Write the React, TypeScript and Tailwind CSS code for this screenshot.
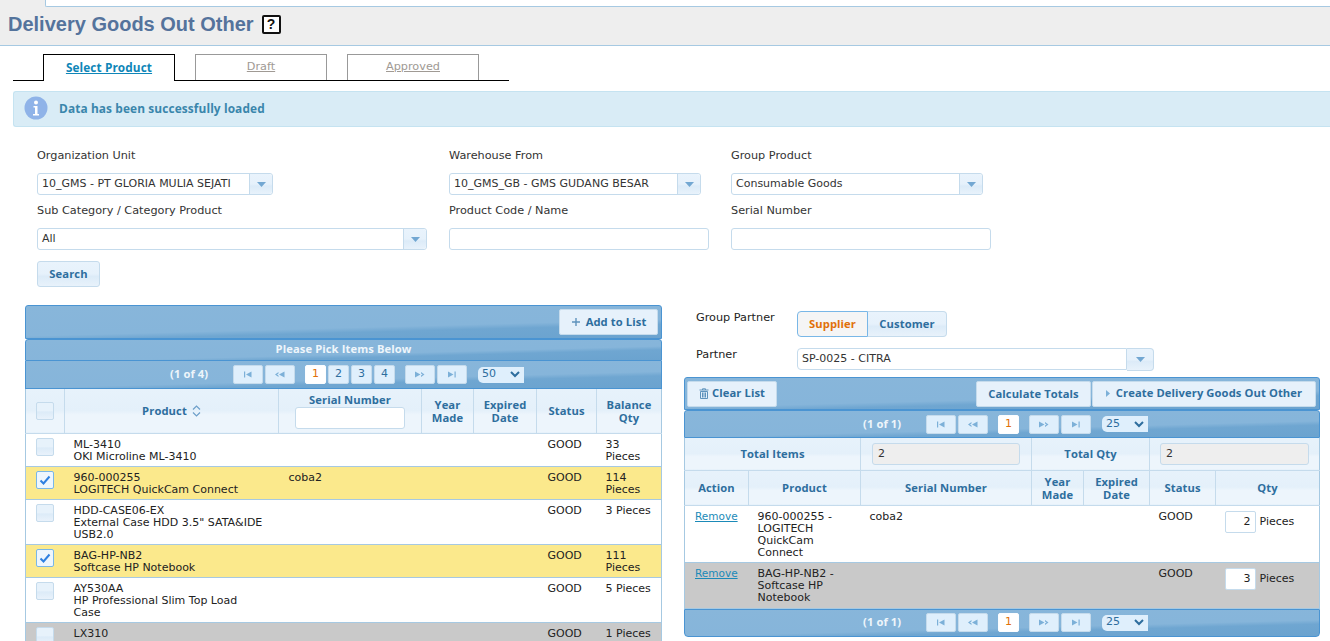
import React from "react";

const barBg = "bg-[linear-gradient(178.5deg,#88b6da_0%,#86b5da_62%,#6fa6d1_72%,#6ba3cf_100%)]";
const headBg = "bg-[linear-gradient(180deg,#e7f2fb_0%,#e4f0fa_50%,#edf5fc_60%,#edf5fc_100%)]";
const btnBg = "bg-[linear-gradient(180deg,#e9f3fc_0%,#e6f1fb_50%,#dcebf8_60%,#e8f2fb_100%)]";
const boldFace = "font-['Open_Sans',sans-serif] font-bold tracking-[0.1px]";
const bold = `${boldFace} text-[11.2px]`;

function Caret() {
  return (
    <svg width="9" height="5" viewBox="0 0 9 5" className="block">
      <path d="M0 0h9L4.5 5z" fill="#72a7d2" />
    </svg>
  );
}

function Combo({ value, w }: { value: string; w: string }) {
  return (
    <div className={`flex h-[22px] ${w} rounded-[3px] border border-[#c5dbec] bg-white`}>
      <div className="flex-1 truncate pl-[4px] text-[11px] leading-[20px] text-[#333]">{value}</div>
      <div className={`flex w-[23px] items-center justify-center rounded-r-[3px] border-l border-[#c5dbec] ${btnBg}`}>
        <Caret />
      </div>
    </div>
  );
}

function Field({ label, children, className = "" }: { label: string; children: React.ReactNode; className?: string }) {
  return (
    <div className={className}>
      <div className="h-[24px] text-[11.25px] leading-[14px] text-[#333]">{label}</div>
      {children}
    </div>
  );
}

function PageIcon({ d }: { d: string }) {
  return (
    <svg width="12" height="7" viewBox="0 0 12 7">
      <path d={d} fill="#7cb0d8" />
    </svg>
  );
}

const FIRST = "M2 0.5h1.2v6H2zM4 3.5L9.5 0.5v6z";
const PREV = "M1 3.5L4.5 1v1.6L3 3.5l1.5 .9V6zM5 3.5L10.5 0.5v6z";
const NEXT = "M1 0.5L6.5 3.5 1 6.5zM7 1L10.5 3.5 7 6V4.4l1.5-.9L7 2.6z";
const LAST = "M2 0.5L7.5 3.5 2 6.5zM8.5 0.5h1.2v6H8.5z";

function NavBtn({ d }: { d: string }) {
  return (
    <span className="flex h-[19px] w-[30px] items-center justify-center rounded-[2px] border border-[#c5dbec] bg-[#dfeffc]">
      <PageIcon d={d} />
    </span>
  );
}

function PageNo({ n, active }: { n: string; active?: boolean }) {
  return (
    <span
      className={`flex h-[19px] w-[21px] items-center justify-center rounded-[2px] border text-[11px] ${
        active ? "border-[#fbfdff] bg-white text-[#e17009]" : "border-[#c5dbec] bg-[#dfeffc] text-[#2e6e9e]"
      }`}
    >
      {n}
    </span>
  );
}

function SizeSelect({ value }: { value: string }) {
  return (
    <span className="flex h-[16px] w-[46px] items-center justify-between rounded-l-[5px] bg-[#dfeffc] pl-[4px] pr-[4px] text-[11px] text-[#2e6e9e]">
      {value}
      <svg width="10" height="7" viewBox="0 0 10 7">
        <path d="M1 1l4 4 4-4" fill="none" stroke="#2e6e9e" strokeWidth="2" />
      </svg>
    </span>
  );
}

function Pager({ of, pages, size, className }: { of: string; pages: string[]; size: string; className: string }) {
  return (
    <div className={`flex items-center ${barBg} ${className}`}>
      <span className={`w-[41px] whitespace-nowrap text-[#eef5fb] ${bold}`}>{of}</span>
      <span className="ml-[22px] flex gap-[2px]">
        <NavBtn d={FIRST} />
        <NavBtn d={PREV} />
      </span>
      <span className="ml-[10px] flex gap-[2px]">
        {pages.map((p, i) => (
          <PageNo key={p} n={p} active={i === 0} />
        ))}
      </span>
      <span className="ml-[10px] flex gap-[2px]">
        <NavBtn d={NEXT} />
        <NavBtn d={LAST} />
      </span>
      <span className="ml-[11px]">
        <SizeSelect value={size} />
      </span>
    </div>
  );
}

function Check({ on }: { on?: boolean }) {
  return (
    <span
      className={`flex h-[18px] w-[18px] items-center justify-center rounded-[2px] border ${
        on ? "border-[#79b7e7] bg-[#eef6fd]" : "border-[#c5dbec] bg-[linear-gradient(180deg,#e7f2fb_50%,#dcebf8_55%,#e9f2fb_100%)]"
      }`}
    >
      {on && (
        <svg width="12" height="10" viewBox="0 0 12 10">
          <path d="M1.5 5.5L4.5 8.5 10.5 1.5" fill="none" stroke="#2f80e0" strokeWidth="2" />
        </svg>
      )}
    </span>
  );
}

function Th({ children, className = "", colSpan }: { children?: React.ReactNode; className?: string; colSpan?: number }) {
  return (
    <th colSpan={colSpan} className={`border-r border-[#c5dbec] px-0 text-center align-middle leading-[13px] text-[#2e6e9e] last:border-r-0 ${bold} ${className}`}>
      {children}
    </th>
  );
}

type Row = { code: string; name: string[]; serial?: string; qty: string[]; bg: string; on?: boolean; h: string };

const rows: Row[] = [
  { code: "ML-3410", name: ["OKI Microline ML-3410"], qty: ["33", "Pieces"], bg: "bg-white", h: "h-[33px]" },
  { code: "960-000255", name: ["LOGITECH QuickCam Connect"], serial: "coba2", qty: ["114", "Pieces"], bg: "bg-[#fbe98c]", on: true, h: "h-[33px]" },
  { code: "HDD-CASE06-EX", name: ['External Case HDD 3.5" SATA&IDE', "USB2.0"], qty: ["3 Pieces"], bg: "bg-white", h: "h-[45px]" },
  { code: "BAG-HP-NB2", name: ["Softcase HP Notebook"], qty: ["111", "Pieces"], bg: "bg-[#fbe98c]", on: true, h: "h-[33px]" },
  { code: "AY530AA", name: ["HP Professional Slim Top Load", "Case"], qty: ["5 Pieces"], bg: "bg-white", h: "h-[45px]" },
  { code: "LX310", name: [], qty: ["1 Pieces"], bg: "bg-[#c9c9c9]", h: "h-[19px]" },
];

function LeftPanel() {
  return (
    <div className="w-[637px] shrink-0">
      <div className={`flex h-[34px] items-center justify-end rounded-t-[3px] border border-[#4a94d2] pr-[3px] ${barBg}`}>
        <span className={`flex h-[26px] w-[99px] items-center justify-center gap-[5px] rounded-[2px] border border-[#c5dbec] bg-[#e6f1fb] text-[#2e6e9e] ${bold}`}>
          <svg width="10" height="10" viewBox="0 0 10 10">
            <path d="M5 1v8M1 5h8" stroke="#5f93bd" strokeWidth="1.4" />
          </svg>
          Add to List
        </span>
      </div>
      <div className={`h-[22px] rounded-t-[3px] border border-[#4a94d2] text-center leading-[18px] text-[#eef5fb] ${bold} ${barBg}`}>
        Please Pick Items Below
      </div>
      <Pager of="(1 of 4)" pages={["1", "2", "3", "4"]} size="50" className="h-[28px] border-x border-b border-[#4a94d2] pl-[144px]" />
      <table className="w-full table-fixed border-collapse border-x border-[#a6c9e2]">
        <colgroup>
          <col className="w-[39px]" />
          <col className="w-[214px]" />
          <col className="w-[143px]" />
          <col className="w-[52px]" />
          <col className="w-[63px]" />
          <col className="w-[60px]" />
          <col />
        </colgroup>
        <thead>
          <tr className={`h-[44px] border-b border-[#c5dbec] ${headBg}`}>
            <Th>
              <span className="flex justify-center">
                <Check />
              </span>
            </Th>
            <Th>
              <span className="inline-flex items-center gap-[5px]">
                Product
                <svg width="9" height="12" viewBox="0 0 9 12">
                  <path d="M1 4.5L4.5 1 8 4.5M1 7.5L4.5 11 8 7.5" fill="none" stroke="#6d9fc9" strokeWidth="1.2" />
                </svg>
              </span>
            </Th>
            <Th>
              <div>Serial Number</div>
              <div className="mx-auto mt-[1px] h-[22px] w-[110px] rounded-[3px] border border-[#c5dbec] bg-white" />
            </Th>
            <Th>Year<br />Made</Th>
            <Th>Expired<br />Date</Th>
            <Th>Status</Th>
            <Th>Balance<br />Qty</Th>
          </tr>
        </thead>
        <tbody>
          {rows.map((r) => (
            <tr key={r.code} className={`${r.h} border-b border-[#a6c9e2] align-top text-[11px] leading-[12px] text-[#222] ${r.bg}`}>
              <td className="pt-[4px]">
                <span className="flex justify-center">
                  <Check on={r.on} />
                </span>
              </td>
              <td className="pl-[9px] pt-[5px]">
                {r.code}
                {r.name.map((n) => (
                  <div key={n}>{n}</div>
                ))}
              </td>
              <td className="pl-[10px] pt-[5px]">{r.serial}</td>
              <td />
              <td />
              <td className="pl-[11px] pt-[5px]">GOOD</td>
              <td className="pl-[9px] pt-[5px]">
                {r.qty.map((q) => (
                  <div key={q}>{q}</div>
                ))}
              </td>
            </tr>
          ))}
        </tbody>
      </table>
    </div>
  );
}

function CartRow({ lines, serial, qty, bg, h }: { lines: string[]; serial?: string; qty: string; bg: string; h: string }) {
  return (
    <tr className={`${h} border-b border-[#a6c9e2] align-top text-[11px] leading-[12px] text-[#222] ${bg}`}>
      <td className="pl-[10px] pt-[4px]">
        <span className="text-[10.5px] text-[#1b8ab8] underline">Remove</span>
      </td>
      <td className="pl-[9px] pt-[5px]">
        {lines.map((l) => (
          <div key={l}>{l}</div>
        ))}
      </td>
      <td className="pl-[9px] pt-[5px]">{serial}</td>
      <td />
      <td />
      <td className="pl-[9px] pt-[5px]">GOOD</td>
      <td className="pl-[9px] pt-[5px]">
        <div className="flex items-center gap-[4px]">
          <span className="h-[22px] w-[31px] rounded-[2px] border border-[#c5dbec] bg-white pr-[4px] text-right text-[11px] leading-[20px]">{qty}</span>
          Pieces
        </div>
      </td>
    </tr>
  );
}

function RightPanel() {
  return (
    <div className="mt-[5px] w-[636px] shrink-0">
      <div className="flex h-[32px] items-start">
        <span className="ml-[12px] mt-[1px] w-[101px] text-[11.25px] leading-[14px] text-[#222]">Group Partner</span>
        <span className={`mt-[1px] flex h-[26px] w-[150px] rounded-[4px] leading-[24px] ${bold}`}>
          <span className="w-[71px] rounded-l-[4px] border border-[#79b7e7] bg-[#f5f5f5] text-center text-[#e17009]">Supplier</span>
          <span className={`flex-1 rounded-r-[4px] border border-l-0 border-[#c5dbec] text-center text-[#2e6e9e] ${btnBg}`}>Customer</span>
        </span>
      </div>
      <div className="mt-[4px] flex h-[31px] items-start">
        <span className="ml-[12px] mt-[2px] w-[101px] text-[11.25px] leading-[14px] text-[#222]">Partner</span>
        <span className="mt-[2px] flex h-[22px] w-[330px] rounded-l-[4px] border border-[#c5dbec] bg-white pl-[4px] text-[11px] leading-[20px] text-[#333]">SP-0025 - CITRA</span>
        <span className={`mt-[2px] flex h-[23px] w-[27px] items-center justify-center rounded-r-[4px] border border-l-0 border-[#c5dbec] ${btnBg}`}>
          <Caret />
        </span>
      </div>
      <div className={`flex h-[33px] items-center gap-[1px] rounded-t-[3px] border border-[#4a94d2] pl-[2px] pr-[3px] ${barBg}`}>
        <span className={`flex h-[26px] w-[90px] items-center justify-center gap-[3px] rounded-[2px] border border-[#c5dbec] bg-[#e6f1fb] text-[#2e6e9e] ${bold}`}>
          <svg width="10" height="11" viewBox="0 0 10 11">
            <path d="M0.5 2h9M3.5 2V.8h3V2M1.5 3.5h7v7h-7zM3.5 4.5v5M5 4.5v5M6.5 4.5v5" fill="none" stroke="#5f93bd" strokeWidth="1" />
          </svg>
          Clear List
        </span>
        <span className={`ml-auto h-[26px] w-[115px] rounded-[2px] border border-[#c5dbec] bg-[#e6f1fb] text-center leading-[24px] text-[#2e6e9e] ${bold}`}>Calculate Totals</span>
        <span className={`flex h-[26px] w-[224px] items-center justify-center gap-[6px] rounded-[2px] border border-[#c5dbec] bg-[#e6f1fb] text-[#2e6e9e] ${bold}`}>
          <svg width="4" height="7" viewBox="0 0 4 7">
            <path d="M0 0l4 3.5L0 7z" fill="#7cb0d8" />
          </svg>
          Create Delivery Goods Out Other
        </span>
      </div>
      <Pager of="(1 of 1)" pages={["1"]} size="25" className="h-[28px] rounded-t-[3px] border border-[#4a94d2] pl-[178px]" />
      <table className="w-full table-fixed border-collapse border-x border-[#a6c9e2]">
        <colgroup>
          <col className="w-[64px]" />
          <col className="w-[112px]" />
          <col className="w-[171px]" />
          <col className="w-[52px]" />
          <col className="w-[66px]" />
          <col className="w-[66px]" />
          <col />
        </colgroup>
        <thead>
          <tr className={`h-[32px] border-b border-[#c5dbec] ${headBg}`}>
            <Th colSpan={2}>Total Items</Th>
            <Th className="text-left">
              <div className="mx-[11px] mt-[1px] h-[22px] rounded-[3px] border border-[#c5dbec] bg-[#eee] pl-[5px] text-left font-['DejaVu_Sans',sans-serif] text-[11px] font-normal leading-[20px] text-[#333]">2</div>
            </Th>
            <Th colSpan={2}>Total Qty</Th>
            <Th colSpan={2}>
              <div className="mx-[10px] mt-[1px] h-[22px] rounded-[3px] border border-[#c5dbec] bg-[#eee] pl-[5px] text-left font-['DejaVu_Sans',sans-serif] text-[11px] font-normal leading-[20px] text-[#333]">2</div>
            </Th>
          </tr>
          <tr className={`h-[35px] border-b border-[#c5dbec] ${headBg}`}>
            <Th>Action</Th>
            <Th>Product</Th>
            <Th>Serial Number</Th>
            <Th>Year<br />Made</Th>
            <Th>Expired<br />Date</Th>
            <Th>Status</Th>
            <Th>Qty</Th>
          </tr>
        </thead>
        <tbody>
          <CartRow lines={["960-000255 -", "LOGITECH", "QuickCam", "Connect"]} serial="coba2" qty="2" bg="bg-white" h="h-[57px]" />
          <CartRow lines={["BAG-HP-NB2 -", "Softcase HP", "Notebook"]} qty="3" bg="bg-[#c9c9c9]" h="h-[46px]" />
        </tbody>
      </table>
      <Pager of="(1 of 1)" pages={["1"]} size="25" className="h-[28px] rounded-b-[4px] border border-[#4a94d2] pl-[178px]" />
    </div>
  );
}

function Tab({ label, active }: { label: string; active?: boolean }) {
  return (
    <span
      className={`flex w-[132px] justify-center border border-b-0 bg-white pt-[4px] underline ${
        active ? `mb-[-1px] h-[27px] border-black text-[11.8px] text-[#0f86b8] ${boldFace}` : "h-[26px] border-[#999] text-[11.25px] text-[#a09a94]"
      }`}
    >
      {label}
    </span>
  );
}

export default function App() {
  return (
    <div className="h-[641px] w-[1330px] overflow-hidden bg-white font-['DejaVu_Sans',sans-serif]">
      <div className="h-[46px] border-b border-[#a6c9e2] bg-[#eeeeee]">
        <div className="ml-[45px] h-[7px] rounded-bl-[2px] border-b border-l border-[#a6c9e2] bg-white" />
        <div className="flex items-center pl-[8px] pt-[6px]">
          <h1 className="font-['Liberation_Sans',sans-serif] text-[20px] font-bold leading-[23px] text-[#54739c]">Delivery Goods Out Other</h1>
          <span className="ml-[8px] flex h-[19px] w-[19px] items-center justify-center rounded-[2px] border-2 border-[#111] bg-white font-['Liberation_Sans',sans-serif] text-[14px] font-bold text-[#111]">?</span>
        </div>
      </div>
      <div className="ml-[13px] mt-[8px] flex h-[27px] w-[496px] gap-[20px] border-b border-black pl-[30px]">
        <Tab label="Select Product" active />
        <Tab label="Draft" />
        <Tab label="Approved" />
      </div>
      <div className="ml-[13px] mt-[10px] flex h-[36px] items-center rounded-l-[3px] border border-r-0 border-[#c5e3f1] bg-[#d9ecf6]">
        <svg width="24" height="26" viewBox="0 0 24 26" className="ml-[10px]">
          <circle cx="12" cy="12" r="11.5" fill="#8fb3e8" />
          <circle cx="12" cy="6.5" r="2" fill="#fff" />
          <path d="M9.5 10h4v8h1.5v1.5h-6V18H11v-6.5H9.5z" fill="#fff" />
        </svg>
        <span className={`ml-[11px] text-[11.9px] text-[#3a86ac] ${boldFace}`}>Data has been successfully loaded</span>
      </div>
      <div className="ml-[37px] mt-[22px] w-[960px]">
        <div className="flex h-[55px]">
          <Field label="Organization Unit" className="w-[412px]">
            <Combo value="10_GMS - PT GLORIA MULIA SEJATI" w="w-[236px]" />
          </Field>
          <Field label="Warehouse From" className="w-[282px]">
            <Combo value="10_GMS_GB - GMS GUDANG BESAR" w="w-[252px]" />
          </Field>
          <Field label="Group Product">
            <Combo value="Consumable Goods" w="w-[252px]" />
          </Field>
        </div>
        <div className="flex h-[57px]">
          <Field label="Sub Category / Category Product" className="w-[412px]">
            <Combo value="All" w="w-[390px]" />
          </Field>
          <Field label="Product Code / Name" className="w-[282px]">
            <div className="h-[22px] w-[260px] rounded-[3px] border border-[#c5dbec] bg-white" />
          </Field>
          <Field label="Serial Number">
            <div className="h-[22px] w-[260px] rounded-[3px] border border-[#c5dbec] bg-white" />
          </Field>
        </div>
        <span className={`block h-[26px] w-[63px] rounded-[3px] border border-[#c5dbec] text-center leading-[24px] text-[#2e6e9e] ${bold} ${btnBg}`}>Search</span>
      </div>
      <div className="ml-[25px] mt-[18px] flex items-start gap-[22px]">
        <LeftPanel />
        <RightPanel />
      </div>
    </div>
  );
}
